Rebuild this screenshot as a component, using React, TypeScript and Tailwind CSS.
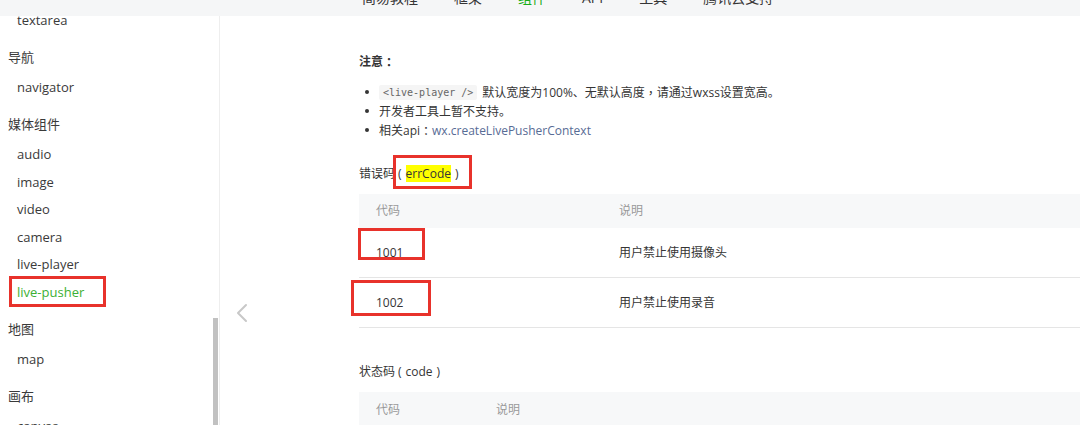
import React from "react";

const FONT = { fontFamily: '"Open Sans", "Noto Sans CJK SC", sans-serif' };
// centered full-width punctuation, like the original page's font
const PUNCT = { fontFamily: '"Noto Sans CJK TC", sans-serif' };

interface NavGroup {
  title: string;
  items: string[];
}

const NAV_TABS = ["简易教程", "框架", "组件", "API", "工具", "腾讯云支持"];

const SIDEBAR: NavGroup[] = [
  { title: "", items: ["textarea"] },
  { title: "导航", items: ["navigator"] },
  {
    title: "媒体组件",
    items: ["audio", "image", "video", "camera", "live-player", "live-pusher"],
  },
  { title: "地图", items: ["map"] },
  { title: "画布", items: ["canvas"] },
];

const ERR_CODES = [
  { code: "1001", desc: "用户禁止使用摄像头" },
  { code: "1002", desc: "用户禁止使用录音" },
];

function TopBar() {
  return (
    <div className="h-[16px] w-full overflow-hidden bg-[#f5f6f7]">
      <div className="-mt-[12px] flex gap-[36px] pl-[362px] text-[14px] leading-[20px] text-[#353535]">
        {NAV_TABS.map((tab) => (
          <span
            key={tab}
            className={tab === "组件" ? "text-[#1aad19]" : undefined}
          >
            {tab}
          </span>
        ))}
      </div>
    </div>
  );
}

function Sidebar() {
  return (
    <aside className="relative h-[409px] w-[220px] shrink-0 overflow-hidden border-r border-[#eeeeee] text-[13px] text-[#3a3a3a]">
      <div className="-mt-[8.75px]">
        {SIDEBAR.map((group, gi) => (
          <div key={gi} className={gi === 0 ? "" : "mt-[7px]"}>
            {group.title && (
              <div className="flex h-[32.5px] items-center pl-[8px]">
                {group.title}
              </div>
            )}
            {group.items.map((item) => (
              <div
                key={item}
                className={
                  "relative flex h-[27.5px] items-center pl-[17px] " +
                  (item === "live-pusher" ? "text-[#3cb034]" : "")
                }
              >
                {item}
                {item === "live-pusher" && (
                  <span className="absolute left-[9px] top-[-2.5px] h-[31px] w-[97px] border-[3px] border-[#e8322b]" />
                )}
              </div>
            ))}
          </div>
        ))}
      </div>
      {/* scrollbar thumb */}
      <div className="absolute bottom-0 right-[1px] h-[107px] w-[5px] bg-[#c1c1c1]" />
    </aside>
  );
}

function TableHeader({ second }: { second: number }) {
  return (
    <div className="flex h-[34px] items-center bg-[#f7f8f9] pl-[17px] text-[12px] text-[#999999]">
      <span style={{ width: second }}>代码</span>
      <span>说明</span>
    </div>
  );
}

function Bullet() {
  return <span className="mx-[6px] h-[4px] w-[4px] rounded-full bg-[#353535]" />;
}

function Content() {
  return (
    <main className="relative h-[409px] flex-1 overflow-hidden">
      <button className="absolute left-[15px] top-[287px] flex h-[20px] w-[14px] items-center justify-center">
        <svg width="12" height="20" viewBox="0 0 12 20" fill="none">
          <polyline
            points="10,2 2,10 10,18"
            stroke="#c8c8c8"
            strokeWidth="2"
            strokeLinecap="round"
            strokeLinejoin="round"
          />
        </svg>
      </button>

      <div className="w-[860px] pl-[139px] pt-[35.5px] text-[12px] leading-[19px] text-[#353535]">
        <div className="flex h-[19px] items-center font-bold">
          注意<span style={PUNCT}>：</span>
        </div>
        <ul className="mt-[12px]">
          <li className="flex h-[19px] items-center">
            <Bullet />
            <span
              className="ml-[4px] rounded-[2px] bg-[#f5f5f5] px-[4px] text-[10px] leading-[15px] text-[#666666]"
              style={{ fontFamily: '"DejaVu Sans Mono", monospace' }}
            >
              {"<live-player />"}
            </span>
            <span className="ml-[5px] flex items-center">
              默认宽度为100%、无默认高度<span style={PUNCT}>，</span>
              请通过wxss设置宽高。
            </span>
          </li>
          <li className="flex h-[19px] items-center">
            <Bullet />
            <span className="ml-[4px]">开发者工具上暂不支持。</span>
          </li>
          <li className="flex h-[19px] items-center">
            <Bullet />
            <span className="ml-[4px] flex items-center">
              相关api<span style={PUNCT}>：</span>
              <span className="text-[#576b95]">wx.createLivePusherContext</span>
            </span>
          </li>
        </ul>

        <div className="mt-[24.5px] flex h-[19px] items-center">
          <span>错误码</span>
          <span className="relative inline-block">
            <span className="pl-[3px]">(</span>
            <span className="ml-[4px] bg-[#ffff00]">errCode</span>
            <span className="ml-[4px]">)</span>
            <span className="absolute left-[-2px] top-[-9.5px] h-[34px] w-[79px] border-[3px] border-[#e8322b]" />
          </span>
        </div>

        <div className="mt-[10.5px]">
          <TableHeader second={243} />
          {ERR_CODES.map((row, i) => (
            <div
              key={row.code}
              className="flex h-[50px] items-center border-b border-[#e5e5e5] pl-[17px]"
            >
              <span className="relative w-[243px]">
                {row.code}
                {i === 0 ? (
                  <span className="absolute left-[-18px] top-[-15px] h-[32px] w-[67px] border-[3px] border-[#e8322b]" />
                ) : (
                  <span className="absolute left-[-25px] top-[-12.5px] h-[36px] w-[80px] border-[3px] border-[#e8322b]" />
                )}
              </span>
              <span>{row.desc}</span>
            </div>
          ))}
        </div>

        <div className="mt-[34px] flex h-[19px] items-center">
          状态码<span className="pl-[3px]">(</span>
          <span className="mx-[4px]">code</span>)
        </div>

        <div className="mt-[11.5px]">
          <TableHeader second={120} />
        </div>
      </div>
    </main>
  );
}

export default function App() {
  return (
    <div className="h-[425px] w-[1080px] overflow-hidden bg-white" style={FONT}>
      <TopBar />
      <div className="flex">
        <Sidebar />
        <Content />
      </div>
    </div>
  );
}
